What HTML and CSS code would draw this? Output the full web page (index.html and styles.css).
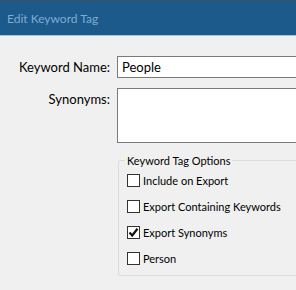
FILE: index.html
```html
<!DOCTYPE html>
<html lang="en">
<head>
  <meta charset="UTF-8">
  <title>Edit Keyword Tag</title>
  <link rel="stylesheet" href="styles.css">
</head>
<body>

  <div class="titlebar">Edit Keyword Tag</div>

  <div class="form">
    <label class="label" for="name">Keyword Name:</label>
    <input class="field" type="text" id="name" value="People">

    <label class="label label-top" for="synonyms">Synonyms:</label>
    <textarea class="field area" id="synonyms"></textarea>

    <fieldset class="options">
      <legend>Keyword Tag Options</legend>

      <div class="check-row">
        <span class="box"></span>
        <span>Include on Export</span>
      </div>
      <div class="check-row">
        <span class="box"></span>
        <span>Export Containing Keywords</span>
      </div>
      <div class="check-row">
        <span class="box">
          <svg width="11" height="11" viewBox="0 0 11 11">
            <path d="M1.5 5.5 L4.2 8.5 L9.5 1.8" fill="none" stroke="#111" stroke-width="2.2"/>
          </svg>
        </span>
        <span>Export Synonyms</span>
      </div>
      <div class="check-row">
        <span class="box"></span>
        <span>Person</span>
      </div>
    </fieldset>
  </div>

</body>
</html>
```

FILE: styles.css
```css
body {
  margin: 0;
  font-family: Lato, "Open Sans", sans-serif;
  font-size: 13px;
  color: #000;
  background-color: #f0f0f0;
  overflow: hidden;
  width: 296px;
  height: 290px;
}

.titlebar {
  height: 33px;
  line-height: 33px;
  padding-left: 7px;
  background-color: #1b5a8a;
  border-top: 2px solid #2c5578;
  border-bottom: 1px solid #a8c3da;
  color: #80abd2;
  font-size: 12px;
}

.form {
  display: grid;
  grid-template-columns: 110px 200px;
  column-gap: 7px;
  row-gap: 10px;
  padding-top: 20px;
}

.label {
  text-align: right;
  align-self: center;
}

.label-top {
  align-self: start;
  padding-top: 3px;
}

.field {
  box-sizing: border-box;
  margin: 0;
  height: 22px;
  padding: 0 4px;
  border: 1px solid #7a7a7a;
  background: #fff;
  font-family: inherit;
  font-size: 13px;
}

.area {
  height: 55px;
  resize: none;
}

.options {
  grid-column: 2;
  margin: 1px 0 0 1px;
  padding: 0 8px 4px 8px;
  border: 1px solid #dcdcdc;
  border-radius: 2px;
  font-size: 11px;
}

.options legend {
  padding: 0 2px;
  margin-left: -2px;
}

.check-row {
  display: flex;
  align-items: center;
  gap: 3px;
  height: 26px;
}

.box {
  box-sizing: border-box;
  width: 13px;
  height: 13px;
  border: 1px solid #333;
  background: #fff;
  display: flex;
  align-items: center;
  justify-content: center;
}
```
